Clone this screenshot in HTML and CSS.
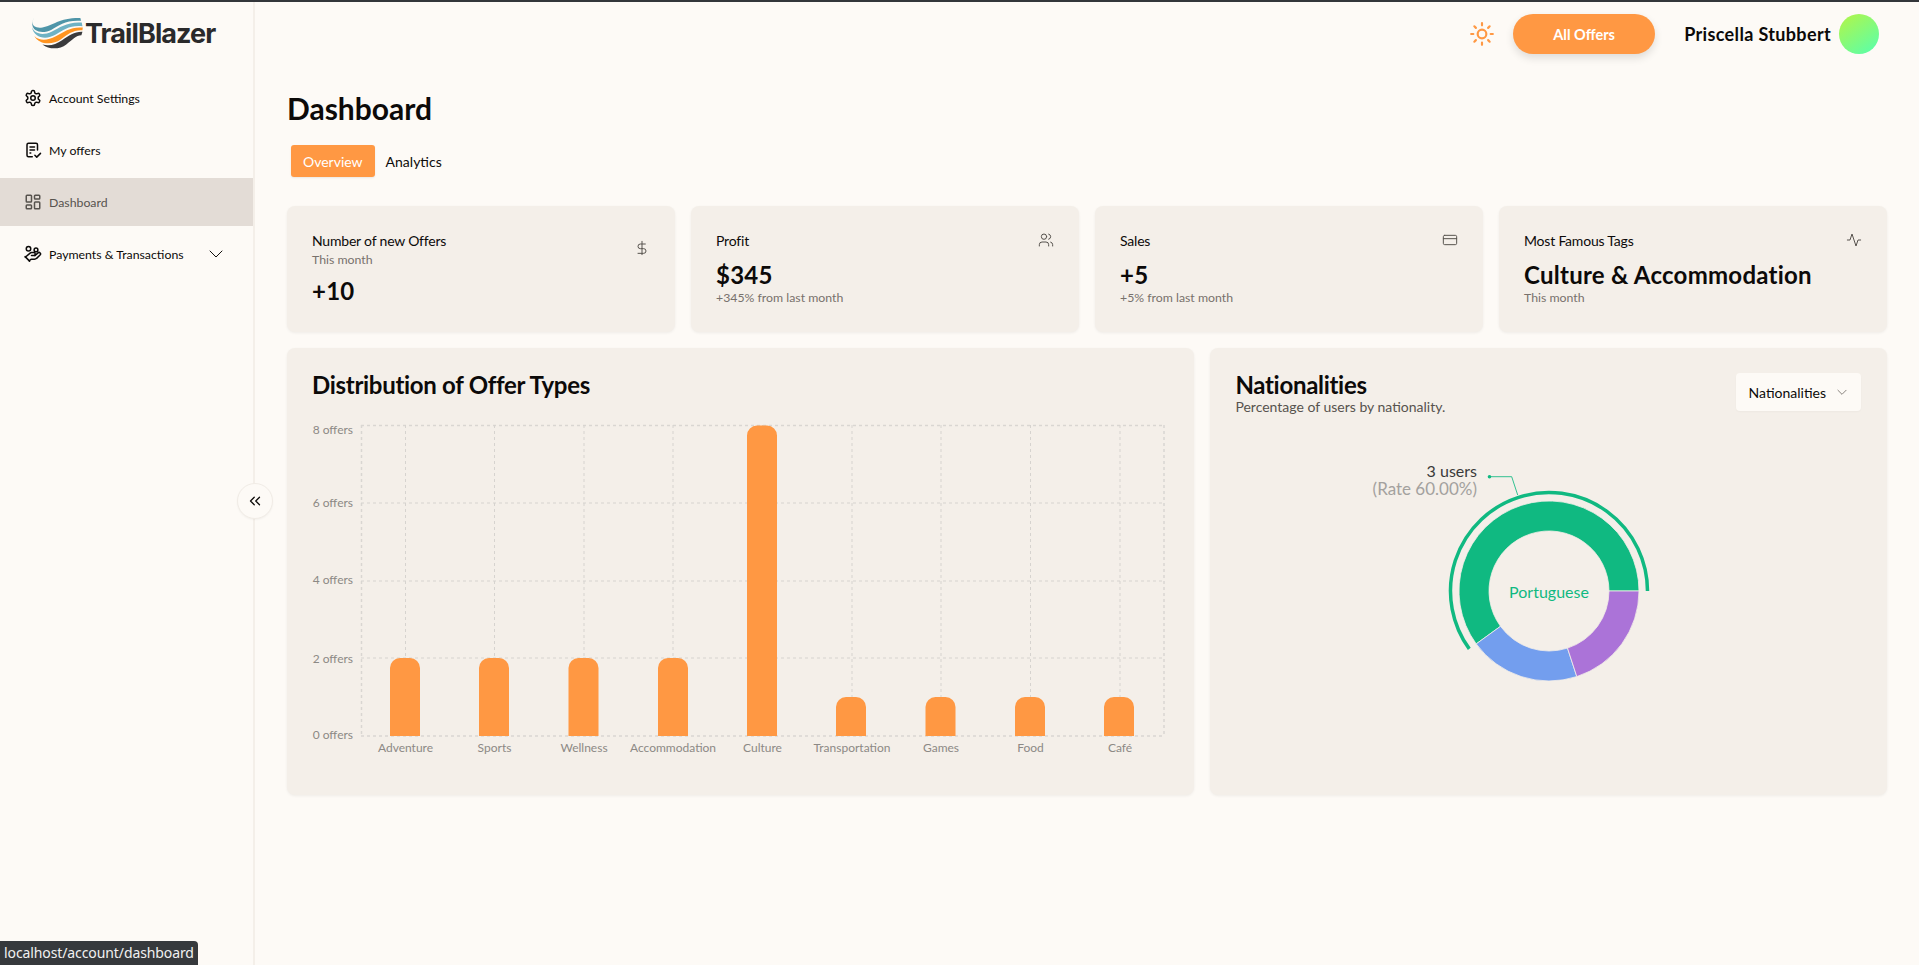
FILE: index.html
```html
<!DOCTYPE html>
<html lang="en">
<head>
<meta charset="utf-8">
<title>TrailBlazer Dashboard</title>
<link rel="stylesheet" href="styles.css">
</head>
<body>
<div class="app">
  <aside class="sidebar">
    <div class="brand">
      <svg class="brand-mark" viewBox="0 0 147 94" aria-hidden="true">
        <path fill="#4f95a8" d="M8 2C-3 20 8 34 32 30 62 25 80 2 140 3L142 11C100 8 78 24 58 36 36 48 4 44 3 20 3 12 5 6 8 2Z"/>
        <path fill="#6fb2c4" d="M2 28C8 48 32 54 58 42 82 30 104 13 144 16L146 26C112 22 92 36 70 50 44 66 8 62 2 28Z"/>
        <path fill="#ff9420" d="M9 54C22 68 46 68 70 55 94 41 114 27 147 30L146 38C120 36 104 50 84 64 62 80 22 80 9 54Z"/>
        <path fill="#3a3a3c" d="M32 78C52 84 70 78 88 66 108 52 124 41 146 42L143 52C128 52 116 66 100 78 82 92 52 94 32 78Z"/>
      </svg>
      <span class="brand-name">TrailBlazer</span>
    </div>
    <nav class="nav">
      <a class="nav-item"><svg class="ico" viewBox="0 0 24 24"><path d="M12.22 2h-.44a2 2 0 0 0-2 2v.18a2 2 0 0 1-1 1.73l-.43.25a2 2 0 0 1-2 0l-.15-.08a2 2 0 0 0-2.73.73l-.22.38a2 2 0 0 0 .73 2.73l.15.1a2 2 0 0 1 1 1.72v.51a2 2 0 0 1-1 1.74l-.15.09a2 2 0 0 0-.73 2.73l.22.38a2 2 0 0 0 2.73.73l.15-.08a2 2 0 0 1 2 0l.43.25a2 2 0 0 1 1 1.73V20a2 2 0 0 0 2 2h.44a2 2 0 0 0 2-2v-.18a2 2 0 0 1 1-1.73l.43-.25a2 2 0 0 1 2 0l.15.08a2 2 0 0 0 2.73-.73l.22-.39a2 2 0 0 0-.73-2.73l-.15-.08a2 2 0 0 1-1-1.74v-.5a2 2 0 0 1 1-1.74l.15-.09a2 2 0 0 0 .73-2.73l-.22-.38a2 2 0 0 0-2.73-.73l-.15.08a2 2 0 0 1-2 0l-.43-.25a2 2 0 0 1-1-1.73V4a2 2 0 0 0-2-2z"/><circle cx="12" cy="12" r="3"/></svg><span>Account Settings</span></a>
      <a class="nav-item"><svg class="ico" viewBox="0 0 24 24"><path d="M18 12V5a2 2 0 0 0-2-2H6a2 2 0 0 0-2 2v14a2 2 0 0 0 2 2h5"/><path d="M8 8h6M8 12h6M8 16h1"/><path d="M14.500 19l2.500 2.500 5-5"/></svg><span>My offers</span></a>
      <a class="nav-item active"><svg class="ico" viewBox="0 0 24 24"><rect x="3" y="3" width="7" height="9" rx="1"/><rect x="14" y="3" width="7" height="5" rx="1"/><rect x="14" y="12" width="7" height="9" rx="1"/><rect x="3" y="16" width="7" height="5" rx="1"/></svg><span>Dashboard</span></a>
      <a class="nav-item"><svg class="ico" viewBox="0 0 24 24"><circle cx="6" cy="5" r="3"/><circle cx="16" cy="6.500" r="2.500"/><path d="M10 14h3a2 2 0 0 0 0-4h-3c-.6 0-1.100.2-1.400.6L2 16"/><path d="M7 21l1.600-1.400c.3-.4.8-.6 1.400-.6h4c1.100 0 2.100-.4 2.800-1.200l4.600-4.400a2 2 0 0 0-2.750-2.910l-4.200 3.900"/><path d="M1.500 15.500l6 6"/></svg><span class="nav-grow">Payments &amp; Transactions</span><svg class="ico nav-chevron" viewBox="0 0 24 24"><path d="M4 8l8 8 8-8"/></svg></a>
    </nav>
    <button class="collapse" type="button" aria-label="Collapse sidebar"><svg class="ico collapse-ico" viewBox="0 0 24 24"><path d="M11 17l-5-5 5-5M18 17l-5-5 5-5"/></svg></button>
  </aside>

  <main class="main">
    <header class="topbar">
      <svg class="sun" viewBox="0 0 24 24"><circle cx="12" cy="12" r="4"/><path d="M12 2v2M12 20v2M4.930 4.930l1.410 1.410M17.660 17.660l1.410 1.410M2 12h2M20 12h2M6.340 17.660l-1.410 1.410M19.070 4.930l-1.410 1.410"/></svg>
      <button class="all-offers" type="button">All Offers</button>
      <span class="user-name">Priscella Stubbert</span>
      <span class="avatar"></span>
    </header>

    <h1 class="page-title">Dashboard</h1>
    <div class="tabs">
      <span class="tab tab-active">Overview</span>
      <span class="tab">Analytics</span>
    </div>

    <section class="stats">
      <article class="card stat">
        <div class="stat-head">
          <div>
            <div class="stat-label">Number of new Offers</div>
            <div class="stat-sub stat-sub-tight">This month</div>
          </div>
          <svg class="stat-ico stat-ico-low" viewBox="0 0 24 24"><path d="M12 2v20M17 6H9.500a3.500 3.500 0 0 0 0 7h5a3.500 3.500 0 0 1 0 7H6"/></svg>
        </div>
        <div class="stat-value stat-value-first">+10</div>
      </article>
      <article class="card stat">
        <div class="stat-head">
          <div class="stat-label">Profit</div>
          <svg class="stat-ico" viewBox="0 0 24 24"><path d="M16 21v-2a4 4 0 0 0-4-4H6a4 4 0 0 0-4 4v2"/><circle cx="9" cy="7" r="4"/><path d="M22 21v-2a4 4 0 0 0-3-3.870M16 3.130a4 4 0 0 1 0 7.750"/></svg>
        </div>
        <div class="stat-value">$345</div>
        <div class="stat-sub">+345% from last month</div>
      </article>
      <article class="card stat">
        <div class="stat-head">
          <div class="stat-label">Sales</div>
          <svg class="stat-ico" viewBox="0 0 24 24"><rect x="2" y="5" width="20" height="14" rx="2"/><path d="M2 10h20"/></svg>
        </div>
        <div class="stat-value">+5</div>
        <div class="stat-sub">+5% from last month</div>
      </article>
      <article class="card stat">
        <div class="stat-head">
          <div class="stat-label">Most Famous Tags</div>
          <svg class="stat-ico" viewBox="0 0 24 24"><path d="M22 12h-4l-3 9L9 3l-3 9H2"/></svg>
        </div>
        <div class="stat-value">Culture &amp; Accommodation</div>
        <div class="stat-sub">This month</div>
      </article>
    </section>

    <section class="charts">
      <article class="card chart-bars">
        <h2 class="chart-title">Distribution of Offer Types</h2>
        <svg class="bar-svg" viewBox="287 348 907 447" aria-label="Distribution of Offer Types">
          <g class="grid-outer">
            <path d="M361 425.500H1164M361 736H1164M361.500 425V736M1164 425V736"/>
          </g>
          <g class="grid-inner">
            <path d="M361 503H1164M361 581H1164M361 658H1164"/>
            <path d="M405.500 425V736M494.500 425V736M584 425V736M673 425V736M762.500 425V736M852 425V736M941 425V736M1030.500 425V736M1120 425V736"/>
          </g>
          <g class="bars">
            <path d="M390 736V668a10 10 0 0 1 10-10h10a10 10 0 0 1 10 10v68Z"/>
            <path d="M479 736V668a10 10 0 0 1 10-10h10a10 10 0 0 1 10 10v68Z"/>
            <path d="M568.500 736V668a10 10 0 0 1 10-10h10a10 10 0 0 1 10 10v68Z"/>
            <path d="M658 736V668a10 10 0 0 1 10-10h10a10 10 0 0 1 10 10v68Z"/>
            <path d="M747 736V435.500a10 10 0 0 1 10-10h10a10 10 0 0 1 10 10V736Z"/>
            <path d="M836 736V707a10 10 0 0 1 10-10h10a10 10 0 0 1 10 10v29Z"/>
            <path d="M925.500 736V707a10 10 0 0 1 10-10h10a10 10 0 0 1 10 10v29Z"/>
            <path d="M1015 736V707a10 10 0 0 1 10-10h10a10 10 0 0 1 10 10v29Z"/>
            <path d="M1104 736V707a10 10 0 0 1 10-10h10a10 10 0 0 1 10 10v29Z"/>
          </g>
          <g class="axis-y">
            <text x="353" y="434">8 offers</text>
            <text x="353" y="507">6 offers</text>
            <text x="353" y="584">4 offers</text>
            <text x="353" y="662.500">2 offers</text>
            <text x="353" y="739">0 offers</text>
          </g>
          <g class="axis-x">
            <text x="405.500" y="752">Adventure</text>
            <text x="494.500" y="752">Sports</text>
            <text x="584" y="752">Wellness</text>
            <text x="673" y="752">Accommodation</text>
            <text x="762.500" y="752">Culture</text>
            <text x="852" y="752">Transportation</text>
            <text x="941" y="752">Games</text>
            <text x="1030.500" y="752">Food</text>
            <text x="1120" y="752">Café</text>
          </g>
        </svg>
      </article>
      <article class="card chart-donut">
        <div class="donut-head">
          <div>
            <h2 class="chart-title">Nationalities</h2>
            <p class="chart-sub">Percentage of users by nationality.</p>
          </div>
          <div class="select"><span>Nationalities</span><svg class="select-chev" viewBox="0 0 24 24"><path d="M5 9l7 7 7-7"/></svg></div>
        </div>
        <svg class="donut-svg" viewBox="1210 440 677 355" aria-label="Nationalities donut chart">
          <path class="slice-green" d="M1639 591A90 90 0 1 0 1476.200 643.900L1500.500 626.300A60 60 0 1 1 1609 591Z"/>
          <path class="slice-blue" d="M1476.200 643.900A90 90 0 0 0 1576.800 676.600L1567.500 648.100A60 60 0 0 1 1500.500 626.300Z"/>
          <path class="slice-purple" d="M1576.800 676.600A90 90 0 0 0 1639 591H1609A60 60 0 0 1 1567.500 648.100Z"/>
          <path class="active-arc" d="M1647.500 591A98.500 98.500 0 1 0 1469.300 648.900"/>
          <path class="leader" d="M1517.700 495L1511.700 476.700H1489.300"/>
          <circle class="leader-dot" cx="1489.500" cy="476.700" r="1.800"/>
          <text class="lbl-main" x="1477" y="477">3 users</text>
          <text class="lbl-rate" x="1477" y="495">(Rate 60.00%)</text>
          <text class="lbl-center" x="1549" y="598">Portuguese</text>
        </svg>
      </article>
    </section>
  </main>
</div>
<div class="status">localhost/account/dashboard</div>
</body>
</html>
```
FILE: styles.css
```css
* { box-sizing: border-box; }
html, body { margin: 0; height: 100%; }
body {
  background: #fdfaf6;
  color: #0c0a09;
  font-family: Lato, "Noto Sans", sans-serif;
  overflow: hidden;
  border-top: 2px solid #33363a;
}
.app { display: flex; height: 963px; }

.sidebar {
  position: relative;
  width: 255px;
  flex: none;
  border-right: 2px solid #f4efe9;
}
.brand { display: flex; align-items: center; height: 62px; padding: 0 0 0 31px; gap: 2px; }
.brand-mark { width: 52px; height: 33px; }
.brand-name { font-family: Inter, sans-serif; font-weight: 700; font-size: 27px; letter-spacing: -0.9px; color: #2a2a2b; }
.nav { display: flex; flex-direction: column; gap: 4px; padding-top: 10px; }
.nav-item { display: flex; align-items: center; gap: 7px; height: 48px; padding: 0 24px; font-size: 12.300px; color: #0c0a09; }
.nav-item.active { background: #e3dcd6; color: #57534e; }
.nav-grow { flex: 1; }
.ico { width: 18px; height: 18px; fill: none; stroke: currentColor; stroke-width: 2; stroke-linecap: round; stroke-linejoin: round; flex: none; }
.nav-chevron { stroke-width: 1.300; margin-right: 4px; }
.collapse {
  position: absolute; right: -20px; top: 481px;
  width: 36px; height: 36px; border-radius: 50%;
  background: #fdfaf6; border: 1px solid #f1ece6; padding: 0;
  display: flex; align-items: center; justify-content: center; color: #0c0a09;
  box-shadow: 0 1px 2px rgba(0,0,0,.04);
}
.collapse-ico { stroke-width: 1.700; }

.main { flex: 1; min-width: 0; padding: 0 32px; }
.topbar { display: flex; align-items: center; justify-content: flex-end; height: 64px; padding-right: 8px; }
.sun { width: 26px; height: 26px; fill: none; stroke: #ff9843; stroke-width: 2; stroke-linecap: round; stroke-linejoin: round; margin-right: 18px; }
.all-offers {
  width: 142px; height: 40px; border: 0; border-radius: 20px;
  background: #ff9843; color: #fff; font: 700 14.500px Lato, sans-serif;
  box-shadow: 0 4px 8px rgba(0,0,0,.12);
  margin-right: 29px;
}
.user-name { font-weight: 700; font-size: 18px; letter-spacing: .35px; margin-right: 8px; }
.avatar { width: 40px; height: 40px; border-radius: 50%; background: linear-gradient(145deg, #b5f545, #55ffb0); }

.page-title { margin: 24px 0 0; font-size: 30px; line-height: 36px; font-weight: 700; }
.tabs { display: flex; margin: 19px 0 0 4px; }
.tab { display: flex; align-items: center; height: 32px; padding: 0 11px; font-size: 14px; border-radius: 3px; }
.tab-active { padding: 0 12px; background: #ff9843; color: #fff; box-shadow: 0 1px 2px rgba(0,0,0,.08); }

.card { background: #f4efe9; border-radius: 8px; box-shadow: 0 1px 3px rgba(0,0,0,.06); }
.stats { display: grid; grid-template-columns: repeat(4, 1fr); gap: 16px; margin-top: 29px; }
.stat { height: 126px; padding: 25px 25px 0; }
.stat-head { display: flex; justify-content: space-between; align-items: flex-start; }
.stat-label { font-size: 14px; line-height: 20px; letter-spacing: -.2px; }
.stat-ico { width: 16px; height: 16px; fill: none; stroke: #57534e; stroke-width: 1.500; stroke-linecap: round; stroke-linejoin: round; margin: 1px 0 0; }
.stat-ico-low { margin-top: 9px; }
.stat-value { font-size: 24px; line-height: 32px; font-weight: 700; letter-spacing: .25px; margin-top: 8px; margin-bottom: -1px; }
.stat-value-first { margin-top: 8px; }
.stat-sub { font-size: 12.300px; line-height: 16px; color: #78716c; }
.stat-sub-tight { line-height: 15px; margin-top: 1px; }

.charts { display: grid; grid-template-columns: 907.400px 676.600px; gap: 16px; margin-top: 16px; }
.chart-bars, .chart-donut { height: 447px; position: relative; overflow: hidden; }
.chart-title { margin: 0; font-size: 24px; line-height: 30px; font-weight: 700; letter-spacing: -.3px; }
.chart-bars .chart-title { padding: 22px 0 0 25px; }
.bar-svg { position: absolute; left: 0; top: 0; width: 907px; height: 447px; }
.grid-outer path { fill: none; stroke: #d9d6d2; stroke-width: 1.500; stroke-dasharray: 3 3; }
.grid-inner path { fill: none; stroke: #d6d3cf; stroke-width: 1; stroke-dasharray: 3 3; }
.bars path { fill: #ff9843; }
.axis-y text { font-size: 12px; fill: #8c8985; text-anchor: end; }
.axis-x text { font-size: 12px; fill: #8c8985; text-anchor: middle; }

.donut-head { display: flex; justify-content: space-between; align-items: flex-start; padding: 22px 26px 0 25px; position: relative; z-index: 1; }
.chart-sub { margin: -1px 0 0; font-size: 14px; line-height: 16px; color: #57534e; }
.select { display: flex; align-items: center; gap: 9px; height: 38px; margin-top: 3px; padding: 0 12px 0 13px; background: #fdfaf6; border-radius: 4px; font-size: 14px; box-shadow: 0 1px 2px rgba(0,0,0,.03); }
.select-chev { width: 14px; height: 14px; fill: none; stroke: #78716c; stroke-width: 1.500; stroke-linecap: round; stroke-linejoin: round; }
.donut-svg { position: absolute; left: 0; top: 92px; width: 677px; height: 355px; }
.slice-green { fill: #10b981; stroke: #f4efe9; stroke-width: .8; }
.slice-blue { fill: #739eee; stroke: #f4efe9; stroke-width: .8; }
.slice-purple { fill: #ab73d8; stroke: #f4efe9; stroke-width: .8; }
.active-arc { fill: none; stroke: #10b981; stroke-width: 3.500; }
.leader { fill: none; stroke: #10b981; stroke-width: 1; opacity: .85; }
.leader-dot { fill: #10b981; }
.lbl-main { font-size: 16px; fill: #3a3a3a; text-anchor: end; }
.lbl-rate { font-size: 17px; fill: #a3a19e; text-anchor: end; }
.lbl-center { font-size: 16px; fill: #10b981; text-anchor: middle; }

.status {
  position: fixed; left: 0; bottom: 0;
  height: 24px; padding: 0 4px; line-height: 24px;
  background: #36393c; color: #f1f1f1; font-size: 14px; letter-spacing: -.1px;
  border-radius: 0 4px 0 0;
  font-family: "Noto Sans", sans-serif;
}
```
